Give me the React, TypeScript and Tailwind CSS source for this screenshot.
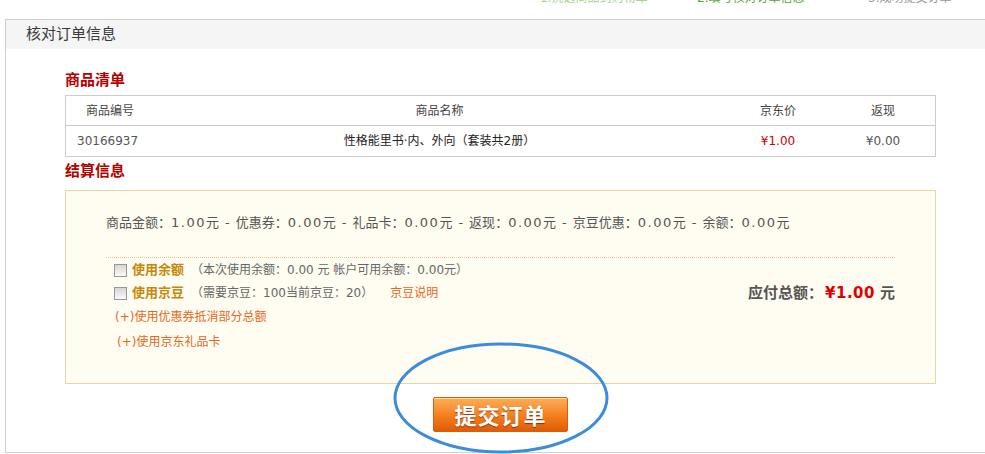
const font = "font-['DejaVu_Sans','Noto_Sans_CJK_SC',sans-serif]";

const summary = [
  ["商品金额", "1.00"],
  ["优惠券", "0.00"],
  ["礼品卡", "0.00"],
  ["返现", "0.00"],
  ["京豆优惠", "0.00"],
  ["余额", "0.00"],
];

function Box() {
  return <span className="inline-block h-[13px] w-[13px] border border-[#989898] bg-linear-to-b from-[#d6d6d6] to-[#fafafa]" />;
}

export default function App() {
  return (
    <div className={`relative w-full overflow-hidden bg-white text-[#333] ${font}`} style={{ height: 454 }}>
      {/* step bar, mostly scrolled off the top */}
      <div className="h-[19px] overflow-hidden">
        <div className="-mt-[9px] flex h-[14px] text-[12px] leading-[14px]">
          <span className="ml-[540px] w-[157px] text-[#a8d48c]">1.挑选商品到购物车</span>
          <span className="w-[171px] text-[#5da63c]">2.填写核对订单信息</span>
          <span className="text-[#9a9a9a]">3.成功提交订单</span>
        </div>
      </div>

      <div className="ml-[5px] w-[990px] border-t border-l border-b border-[#cfcfcf]">
        <div className="flex h-[29px] items-center bg-[#f5f5f5] pl-[20px] text-[15px] text-[#3a3a3a]">核对订单信息</div>

        <div className="px-[59px] pb-[20px]">
          <h3 className="mt-[21px] mb-[5px] h-[20px] text-[15px] leading-[20px] font-bold text-[#b80000]">商品清单</h3>
          <div className="border border-[#cccccc] text-[12px]">
            <div className="grid h-[30px] grid-cols-[88px_1fr_106px_104px] items-center border-b border-[#cccccc] text-center text-[#444]">
              <span>商品编号</span>
              <span>商品名称</span>
              <span>京东价</span>
              <span>返现</span>
            </div>
            <div className="grid h-[30px] grid-cols-[88px_1fr_106px_104px] items-center text-center">
              <span className="pl-[11px] text-left text-[#555]">30166937</span>
              <span className="text-[#222]">性格能里书·内、外向（套装共2册）</span>
              <span className="text-[#cc0000]">¥1.00</span>
              <span className="text-[#555]">¥0.00</span>
            </div>
          </div>

          <h3 className="mt-[4px] mb-[9px] h-[20px] text-[15px] leading-[20px] font-bold text-[#b80000]">结算信息</h3>
          <div className="border border-[#e6d5a6] bg-[#fffdf1] px-[40px] pt-[22px] pb-[29px]">
            <div className="flex h-[20px] items-center whitespace-nowrap text-[13px] leading-[20px] text-[#555]">
              {summary.map(([k, v], i) => (
                <span key={k} className="flex items-center">
                  {i > 0 && <span className="mx-[6px]">-</span>}
                  {k}：<span className="tracking-[1.5px]">{v}</span>元
                </span>
              ))}
            </div>
            <div className="mt-[24px] flex justify-between border-t border-dotted border-[#ecc39c]">
              <div className="text-[12px]">
                <div className="flex h-[24px] items-center gap-[5px] pl-[8px]">
                  <Box />
                  <b className="text-[13px] text-[#c5880a]">使用余额</b>
                  <span className="ml-[2px] text-[#666]">（本次使用余额：0.00 元 帐户可用余额：0.00元）</span>
                </div>
                <div className="flex h-[22px] items-center gap-[5px] pl-[8px]">
                  <Box />
                  <b className="text-[13px] text-[#c5880a]">使用京豆</b>
                  <span className="ml-[2px] text-[#666]">（需要京豆：100当前京豆：20）</span>
                  <span className="ml-[12px] text-[#e4691e]">京豆说明</span>
                </div>
                <div className="flex h-[26px] items-center pl-[9px] text-[#e4691e]">(+)使用优惠券抵消部分总额</div>
                <div className="flex h-[24px] items-center pl-[11px] text-[#e4691e]">(+)使用京东礼品卡</div>
              </div>
              <div className="pt-[24px]">
                <div className="flex h-[22px] items-center text-[15px] font-bold text-[#555]">
                  应付总额：<span className="ml-[2px] tracking-[0.5px] text-[#e00000]">¥1.00</span>
                  <span className="ml-[5px]">元</span>
                </div>
              </div>
            </div>
          </div>

          <div className="mt-[13px] flex justify-center">
            <button className="h-[35px] w-[135px] rounded-[2px] border border-[#d45f0c] bg-linear-to-b from-[#fcae55] via-[#f5821f] to-[#e15a04] text-[22px] font-bold tracking-[1px] text-white shadow-[inset_0_1px_0_rgba(255,235,190,0.8)] [text-shadow:0_1px_1px_rgba(120,40,0,0.8)] font-['Noto_Sans_CJK_SC',sans-serif]">
              提交订单
            </button>
          </div>
        </div>
      </div>

      {/* hand-drawn highlight ring over the button */}
      <svg className="pointer-events-none absolute left-[392px] top-[341px]" width="218" height="114" viewBox="0 0 218 114">
        <ellipse cx="109" cy="57" rx="106" ry="54" fill="none" stroke="#3b8cdb" strokeWidth="3" />
      </svg>
    </div>
  );
}
